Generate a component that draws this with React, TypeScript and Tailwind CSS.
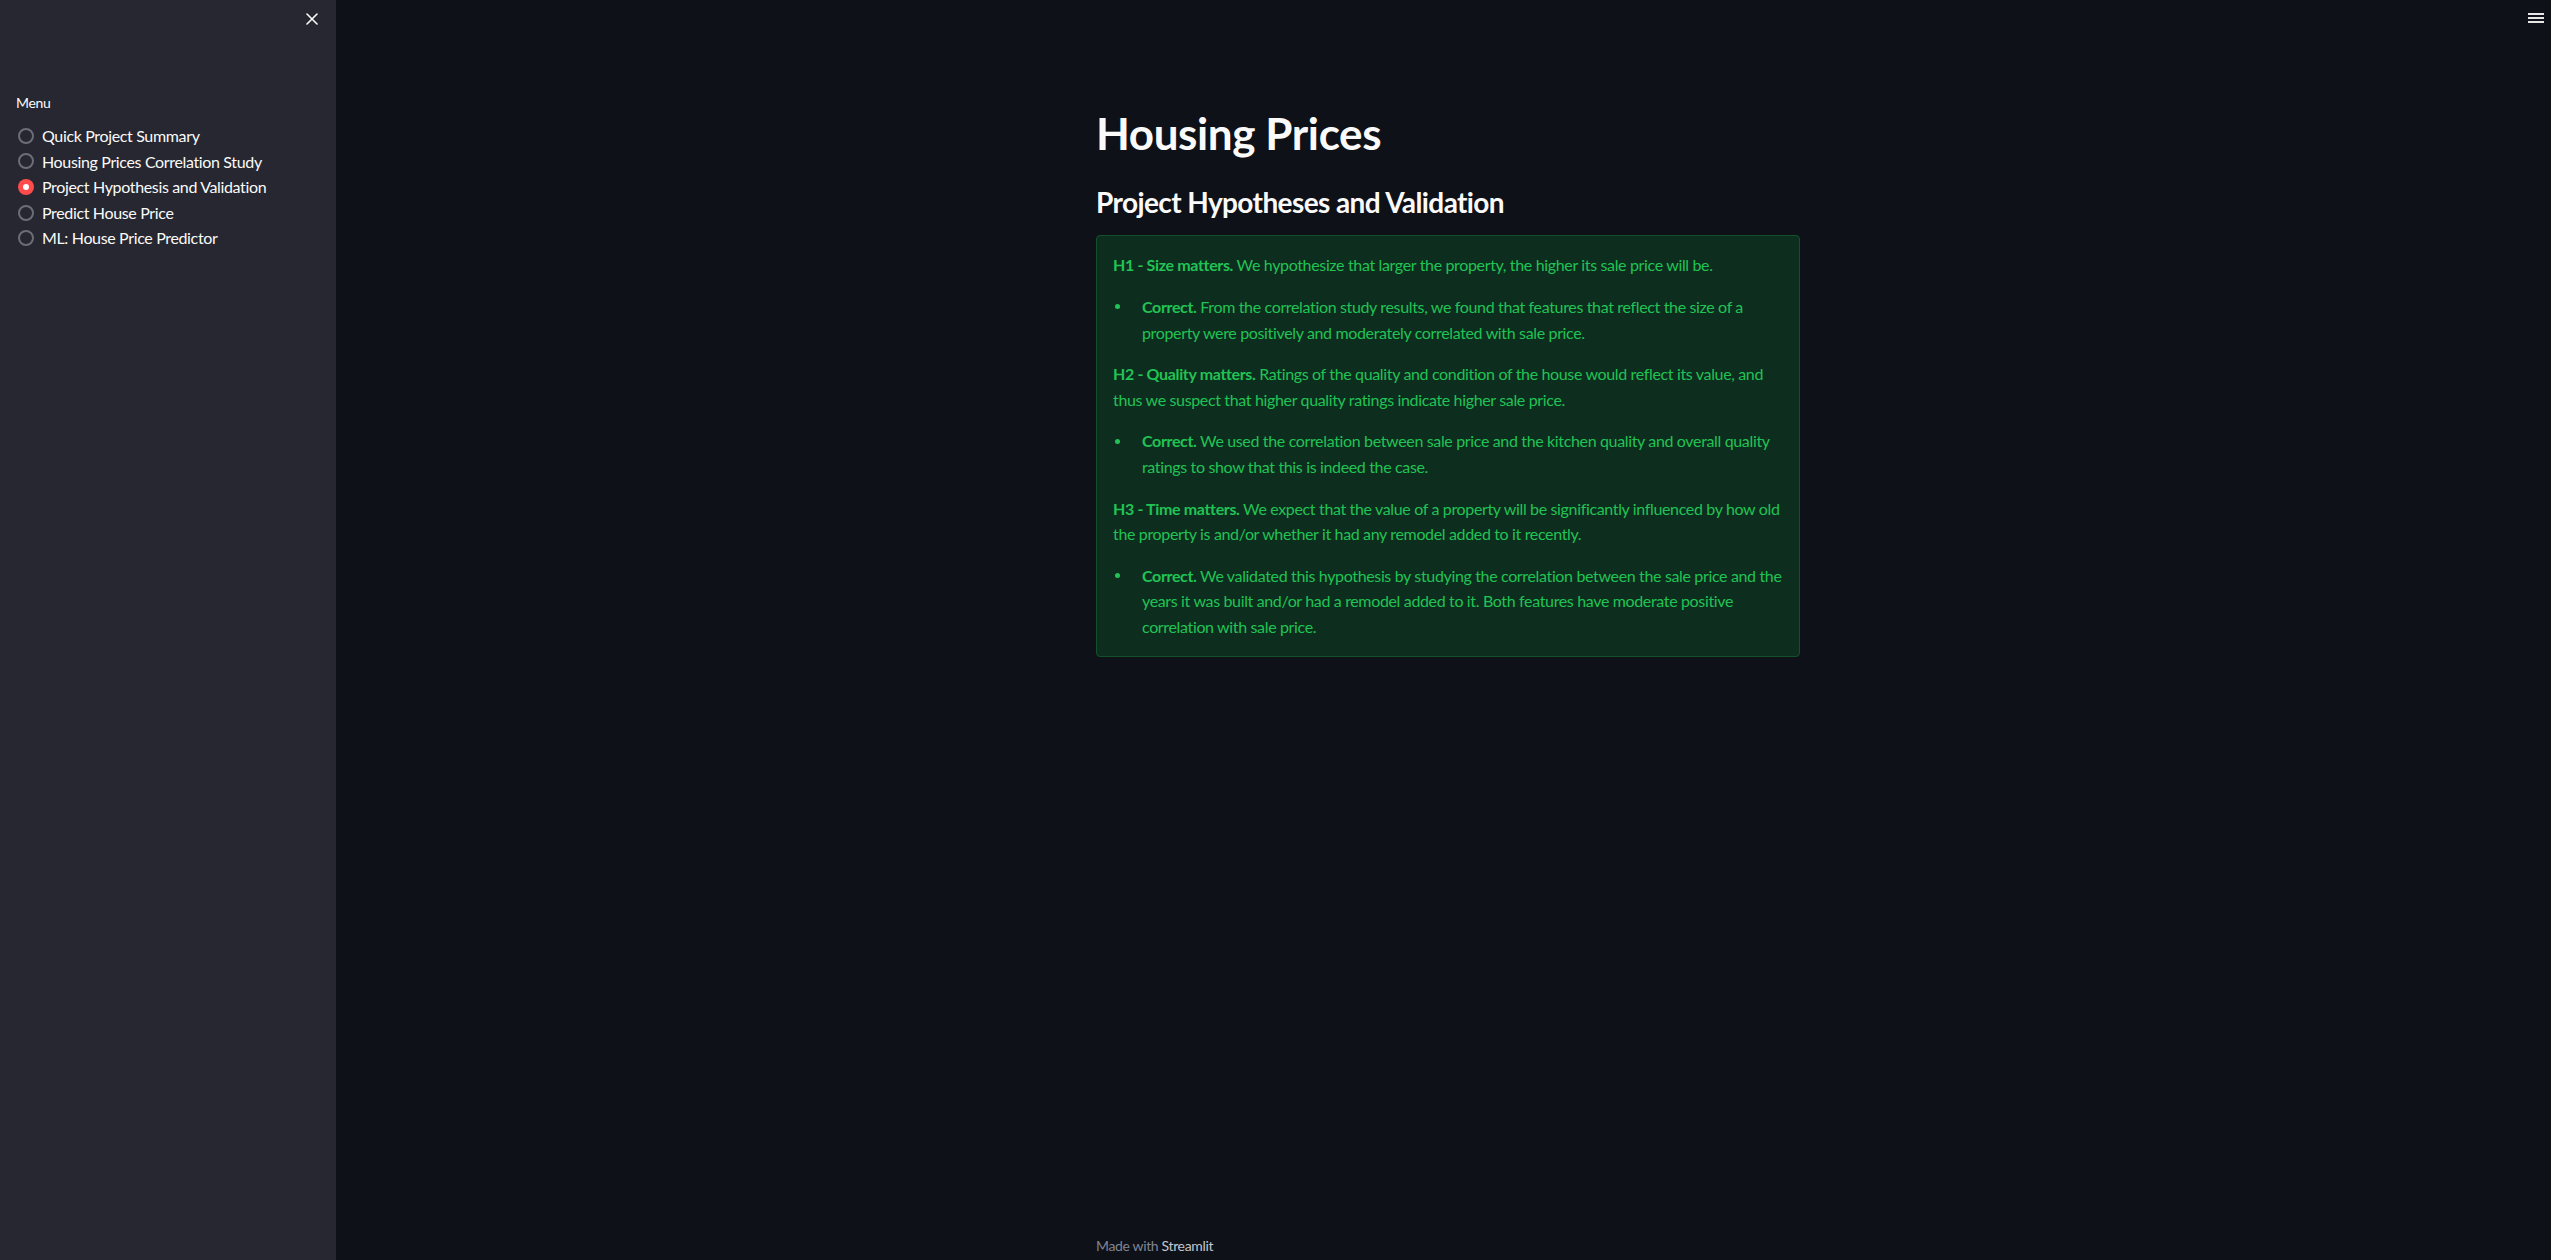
type Item = { lead: string; text: string };

const pages = [
  "Quick Project Summary",
  "Housing Prices Correlation Study",
  "Project Hypothesis and Validation",
  "Predict House Price",
  "ML: House Price Predictor",
];
const active = 2;

const hypotheses: { head: Item; result: Item }[] = [
  {
    head: { lead: "H1 - Size matters.", text: "We hypothesize that larger the property, the higher its sale price will be." },
    result: {
      lead: "Correct.",
      text: "From the correlation study results, we found that features that reflect the size of a property were positively and moderately correlated with sale price.",
    },
  },
  {
    head: {
      lead: "H2 - Quality matters.",
      text: "Ratings of the quality and condition of the house would reflect its value, and thus we suspect that higher quality ratings indicate higher sale price.",
    },
    result: {
      lead: "Correct.",
      text: "We used the correlation between sale price and the kitchen quality and overall quality ratings to show that this is indeed the case.",
    },
  },
  {
    head: {
      lead: "H3 - Time matters.",
      text: "We expect that the value of a property will be significantly influenced by how old the property is and/or whether it had any remodel added to it recently.",
    },
    result: {
      lead: "Correct.",
      text: "We validated this hypothesis by studying the correlation between the sale price and the years it was built and/or had a remodel added to it. Both features have moderate positive correlation with sale price.",
    },
  },
];

function Radio({ label, checked }: { label: string; checked: boolean }) {
  return (
    <label className="flex items-center leading-[25.6px]">
      <span
        className={
          checked
            ? "ml-[2px] flex h-4 w-4 items-center justify-center rounded-full bg-[#ff4b4b]"
            : "ml-[2px] h-4 w-4 rounded-full border-2 border-[#6c6e76]"
        }
      >
        {checked && <span className="h-[6px] w-[6px] rounded-full bg-white" />}
      </span>
      <span className="ml-2 text-[16px] text-[#fafafa]">{label}</span>
    </label>
  );
}

export default function App() {
  return (
    <div className="flex h-screen w-full bg-[#0e1117] font-['Lato',sans-serif] tracking-[-0.35px]">
      <aside className="w-[336px] shrink-0 bg-[#262730] px-4">
        <div className="flex justify-end pr-[2px] pt-[13px]">
          <svg width="12" height="12" viewBox="0 0 12 12" className="text-[#fafafa]">
            <path d="M1 1L11 11M11 1L1 11" stroke="currentColor" strokeWidth="1.6" strokeLinecap="round" />
          </svg>
        </div>
        <div className="mt-[68px] text-[14px] leading-5 text-[#fafafa]">Menu</div>
        <div className="mt-[10px]">
          {pages.map((p, i) => (
            <Radio key={p} label={p} checked={i === active} />
          ))}
        </div>
      </aside>

      <main className="relative flex flex-1 flex-col pl-[9px]">
        <button type="button" className="absolute right-[7px] top-[13px] flex w-4 flex-col gap-[2px]">
          <span className="h-[2px] w-4 bg-[#e6e6e6]" />
          <span className="h-[2px] w-4 bg-[#e6e6e6]" />
          <span className="h-[2px] w-4 bg-[#e6e6e6]" />
        </button>

        <div className="mx-auto w-[736px] px-4 pt-[107px]">
          <h1 className="text-[44px] font-bold leading-[1.2] tracking-[-0.4px] text-[#fafafa]">Housing Prices</h1>
          <h3 className="mt-[26px] text-[28px] font-bold leading-[1.2] tracking-[-0.6px] text-[#fafafa]">
            Project Hypotheses and Validation
          </h3>
          <div className="mt-[16px] space-y-4 rounded border border-[#14502b] bg-[#0d2d1f] p-4 text-[16px] leading-[1.6] text-[#21c354]">
            {hypotheses.map((h) => (
              <div key={h.head.lead} className="space-y-4">
                <p>
                  <b>{h.head.lead}</b> {h.head.text}
                </p>
                <div className="flex">
                  <span className="flex h-[25.6px] w-[29px] shrink-0 items-center pl-[2px]">
                    <span className="h-[5px] w-[5px] rounded-full bg-[#21c354]" />
                  </span>
                  <p>
                    <b>{h.result.lead}</b> {h.result.text}
                  </p>
                </div>
              </div>
            ))}
          </div>
        </div>

        <footer className="mx-auto mt-auto w-[736px] px-4 pb-[3px] text-[14px] leading-[1.6] text-[#808495]">
          Made with <span className="text-[#c4c6cf]">Streamlit</span>
        </footer>
      </main>
    </div>
  );
}
